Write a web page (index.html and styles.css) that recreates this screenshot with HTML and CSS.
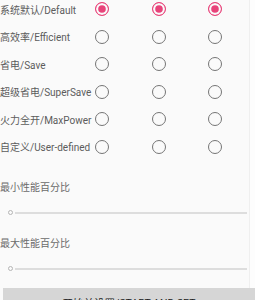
FILE: index.html
```
<!DOCTYPE html>
<html>
<head>
  <meta charset="UTF-8">
  <meta name="viewport" content="width=device-width, initial-scale=1.0">
  <title>性能模式</title>
  <link rel="stylesheet" href="styles.css">
</head>
<body>
  <div class="page">
    <form class="modes">
      <div class="row">
        <span class="label">系统默认/Default</span>
        <input type="radio" name="m1" checked>
        <input type="radio" name="m2" checked>
        <input type="radio" name="m3" checked>
      </div>
      <div class="row">
        <span class="label">高效率/Efficient</span>
        <input type="radio" name="m1">
        <input type="radio" name="m2">
        <input type="radio" name="m3">
      </div>
      <div class="row">
        <span class="label">省电/Save</span>
        <input type="radio" name="m1">
        <input type="radio" name="m2">
        <input type="radio" name="m3">
      </div>
      <div class="row">
        <span class="label">超级省电/SuperSave</span>
        <input type="radio" name="m1">
        <input type="radio" name="m2">
        <input type="radio" name="m3">
      </div>
      <div class="row">
        <span class="label">火力全开/MaxPower</span>
        <input type="radio" name="m1">
        <input type="radio" name="m2">
        <input type="radio" name="m3">
      </div>
      <div class="row">
        <span class="label">自定义/User-defined</span>
        <input type="radio" name="m1">
        <input type="radio" name="m2">
        <input type="radio" name="m3">
      </div>
    </form>

    <div class="percent">
      <p class="title">最小性能百分比</p>
      <div class="slider"><span class="thumb"></span><span class="track"></span></div>
    </div>

    <div class="percent">
      <p class="title">最大性能百分比</p>
      <div class="slider"><span class="thumb"></span><span class="track"></span></div>
    </div>

    <button class="start">开始并设置/START AND SET</button>
  </div>
</body>
</html>
```

FILE: styles.css
```
* {
  box-sizing: border-box;
  font-family: Roboto, "Noto Sans CJK SC", sans-serif;
}

body {
  margin: 0;
  background: #fdfdfd;
  overflow: hidden;
}

.page {
  width: 250px;
  height: 300px;
  background: #fafafa;
  border-right: 1px solid #efefef;
}

.modes {
  display: flex;
  flex-direction: column;
  gap: 9.5px;
  margin: 0;
}

.row {
  display: flex;
  align-items: center;
  gap: 42.5px;
  height: 18px;
}

.label {
  width: 95px;
  margin-right: -42.5px;
  font-size: 10px;
  color: #5c5c5c;
  white-space: nowrap;
}

input[type="radio"] {
  appearance: none;
  -webkit-appearance: none;
  margin: 0;
  width: 14px;
  height: 14px;
  border: 1.6px solid #757575;
  border-radius: 50%;
  flex: none;
}

input[type="radio"]:checked {
  border-color: #e8437a;
  background: #e8437a;
  box-shadow: inset 0 0 0 2.2px #fafafa;
}

.percent {
  padding-top: 26px;
}

.percent + .percent {
  padding-top: 19px;
}

.title {
  margin: 0;
  font-size: 10px;
  color: #6a6a6a;
  line-height: 12px;
}

.slider {
  display: flex;
  align-items: center;
  height: 12px;
  margin-top: 13px;
  padding-left: 8px;
}

.thumb {
  width: 5px;
  height: 5px;
  border: 1.2px solid #b5b5b5;
  border-radius: 50%;
  flex: none;
}

.track {
  flex: 1;
  height: 2px;
  margin-left: 2px;
  margin-right: 2px;
  background: #dddddd;
}

.start {
  display: block;
  width: 252px;
  height: 30px;
  margin: 13px 0 0 3px;
  border: none;
  background: #d6d6d6;
  color: #222;
  font-size: 10.5px;
  padding: 0;
}
```
